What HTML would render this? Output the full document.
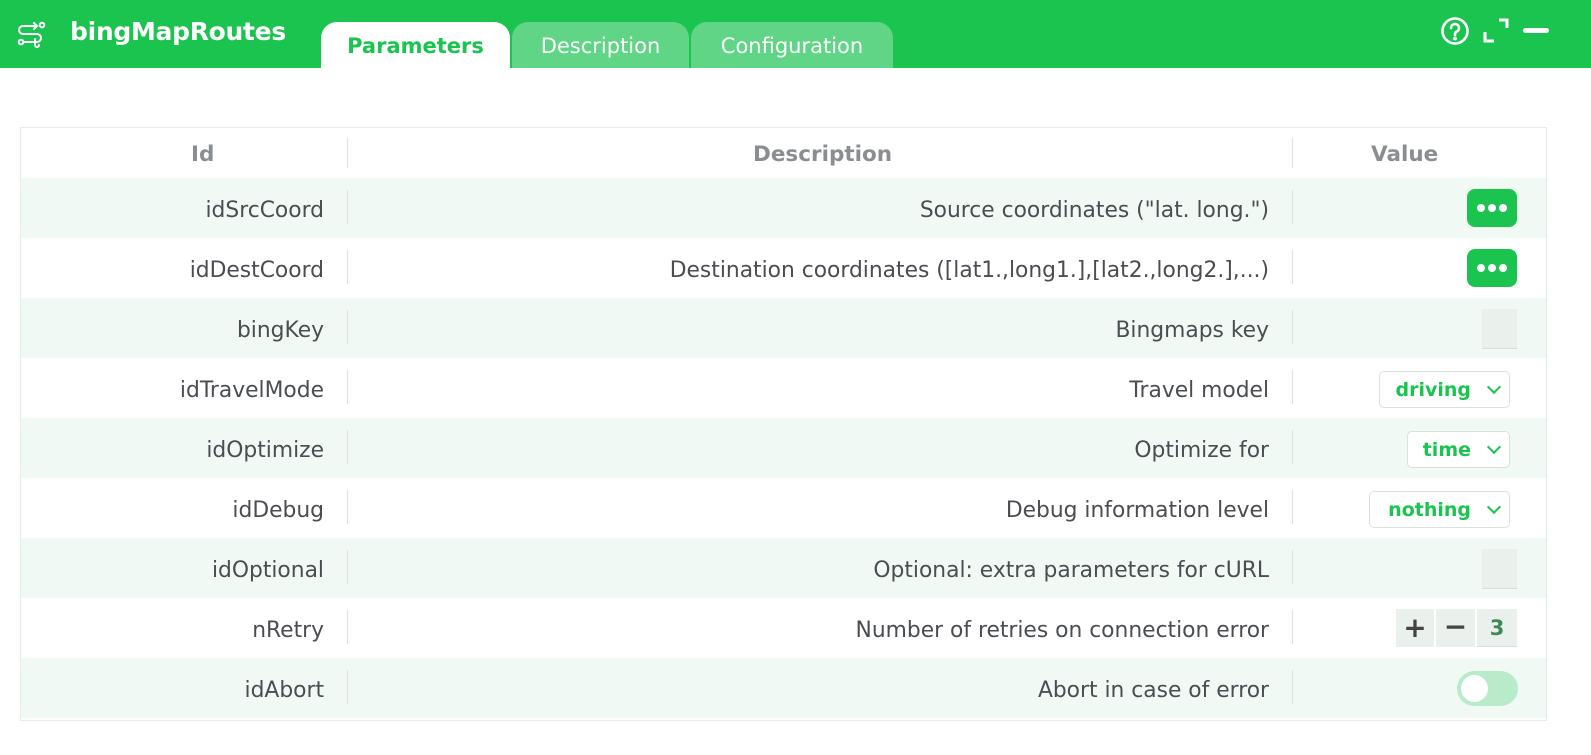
<!DOCTYPE html>
<html><head><meta charset="utf-8"><style>
*{box-sizing:border-box;margin:0;padding:0}
body{width:1591px;height:755px;background:#fff;font-family:"DejaVu Sans","Liberation Sans",sans-serif;position:relative;overflow:hidden}
.hdr{position:absolute;left:0;top:0;width:1591px;height:68px;background:#1ac44f}
.title{position:absolute;left:70px;top:17px;color:#fff;font-weight:bold;font-size:25px;letter-spacing:-0.3px}
.tab{position:absolute;top:22px;height:46px;border-radius:16px 16px 0 0;font-size:21px;text-align:center;line-height:48px;color:#fff}
.tbl{position:absolute;left:20px;top:127px;width:1527px;height:594px;border:1px solid #e6ece8}
.row{position:absolute;left:0;width:1525px;height:60px}
.row.s{background:#f1f9f4}
.c1{position:absolute;right:1222px;top:3px;line-height:60px;font-size:21.8px;color:#4a4d52}
.c2{position:absolute;right:277px;top:3px;line-height:60px;font-size:21.8px;color:#4a4d52}
.sep{position:absolute;top:12px;width:1px;height:34px;background:#dde3df}
.th{font-weight:bold;color:#8a8d91;font-size:21.5px;position:absolute;line-height:50px;top:2px}
.dots{position:absolute;right:29px;top:11px;width:50px;height:38px;background:#1ac44f;border-radius:8px}
.dots i{position:absolute;top:15px;width:8px;height:8px;border-radius:50%;background:#fff;display:block}
.inp{position:absolute;right:29px;top:11px;width:35px;height:40px;background:#eaf0ec;border-bottom:1px solid #d7dfd9}
.sel{position:absolute;right:36px;top:13px;height:37px;border:1px solid #d9e3dc;border-radius:5px;background:#fff;color:#1ac44f;font-weight:bold;font-size:19px;line-height:37px;padding-right:38px;text-align:right}
.sel:after{content:"";position:absolute;right:10px;top:10px;width:8px;height:8px;border-right:2px solid #1ac44f;border-bottom:2px solid #1ac44f;transform:rotate(45deg)}
</style></head><body>
<div class="hdr">
<svg style="position:absolute;left:16px;top:19px" width="32" height="32" viewBox="0 0 32 32" fill="none" stroke="#fff" stroke-width="2" stroke-linecap="round">
<path d="M18 4l3 3-3 3M21 7H7a4 4 0 0 0 0 8h14a4 4 0 0 1 0 8H11"/><circle cx="26" cy="6" r="2.3"/><circle cx="5" cy="23" r="2.3"/><path d="M7.5 23H19M19 20v6a2 2 0 0 0 4 0"/>
</svg>
<div class="title">bingMapRoutes</div>
<div class="tab" style="left:321px;width:189px;background:#fff;color:#1ac44f;font-weight:bold">Parameters</div>
<div class="tab" style="left:512px;width:177px;background:#5fd585">Description</div>
<div class="tab" style="left:691px;width:202px;background:#5fd585">Configuration</div>
<svg style="position:absolute;left:1440px;top:16px" width="30" height="30" viewBox="0 0 30 30" fill="none" stroke="#fff" stroke-width="2.6"><circle cx="15" cy="15" r="12.5"/><path d="M11 12a4 4 0 1 1 5.5 3.7c-1 .5-1.5 1.2-1.5 2.3v1" stroke-linecap="round"/><circle cx="15" cy="22.5" r="0.6" fill="#fff"/></svg>
<svg style="position:absolute;left:1483px;top:18px" width="28" height="26" viewBox="0 0 28 26" fill="none" stroke="#fff" stroke-width="3"><path d="M16 2h8v8M2 14v9h9"/></svg>
<div style="position:absolute;left:1523px;top:28px;width:26px;height:5px;border-radius:3px;background:#fff"></div>
</div>
<div class="tbl">
<div class="row" style="top:0;height:50px">
<div class="th" style="left:170px">Id</div><div class="sep" style="left:326px;top:10px;height:30px"></div>
<div class="th" style="left:732px">Description</div><div class="sep" style="left:1271px;top:10px;height:30px"></div>
<div class="th" style="left:1350px">Value</div>
</div>
<div class="row s" style="top:50px"><div class="c1">idSrcCoord</div><div class="sep" style="left:326px"></div><div class="c2">Source coordinates ("lat. long.")</div><div class="sep" style="left:1271px"></div><div class="dots"><i style="left:10px"></i><i style="left:21px"></i><i style="left:32px"></i></div></div>
<div class="row" style="top:110px"><div class="c1">idDestCoord</div><div class="sep" style="left:326px"></div><div class="c2">Destination coordinates ([lat1.,long1.],[lat2.,long2.],...)</div><div class="sep" style="left:1271px"></div><div class="dots"><i style="left:10px"></i><i style="left:21px"></i><i style="left:32px"></i></div></div>
<div class="row s" style="top:170px"><div class="c1">bingKey</div><div class="sep" style="left:326px"></div><div class="c2">Bingmaps key</div><div class="sep" style="left:1271px"></div><div class="inp"></div></div>
<div class="row" style="top:230px"><div class="c1">idTravelMode</div><div class="sep" style="left:326px"></div><div class="c2">Travel model</div><div class="sep" style="left:1271px"></div><div class="sel" style="width:131px">driving</div></div>
<div class="row s" style="top:290px"><div class="c1">idOptimize</div><div class="sep" style="left:326px"></div><div class="c2">Optimize for</div><div class="sep" style="left:1271px"></div><div class="sel" style="width:103px">time</div></div>
<div class="row" style="top:350px"><div class="c1">idDebug</div><div class="sep" style="left:326px"></div><div class="c2">Debug information level</div><div class="sep" style="left:1271px"></div><div class="sel" style="width:141px">nothing</div></div>
<div class="row s" style="top:410px"><div class="c1">idOptional</div><div class="sep" style="left:326px"></div><div class="c2">Optional: extra parameters for cURL</div><div class="sep" style="left:1271px"></div><div class="inp"></div></div>
<div class="row" style="top:470px"><div class="c1">nRetry</div><div class="sep" style="left:326px"></div><div class="c2">Number of retries on connection error</div><div class="sep" style="left:1271px"></div>
<div style="position:absolute;left:1375px;top:11px;width:38px;height:38px;background:#eaf0ec;text-align:center;line-height:38px;font-size:28px;color:#444;font-weight:bold">+</div>
<div style="position:absolute;left:1415px;top:11px;width:39px;height:38px;background:#eaf0ec;text-align:center;line-height:36px;font-size:28px;color:#444;font-weight:bold">−</div>
<div style="position:absolute;left:1456px;top:11px;width:40px;height:38px;background:#eaf0ec;border-bottom:1px solid #d7dfd9;text-align:center;line-height:38px;font-size:21px;color:#3e8a55;font-weight:bold">3</div>
</div>
<div class="row s" style="top:530px"><div class="c1">idAbort</div><div class="sep" style="left:326px"></div><div class="c2">Abort in case of error</div><div class="sep" style="left:1271px"></div>
<div style="position:absolute;left:1436px;top:13px;width:61px;height:35px;border-radius:18px;background:#b8ebc9"><div style="position:absolute;left:4px;top:4px;width:27px;height:27px;border-radius:50%;background:#fff"></div></div>
</div>
</div>
</body></html>
